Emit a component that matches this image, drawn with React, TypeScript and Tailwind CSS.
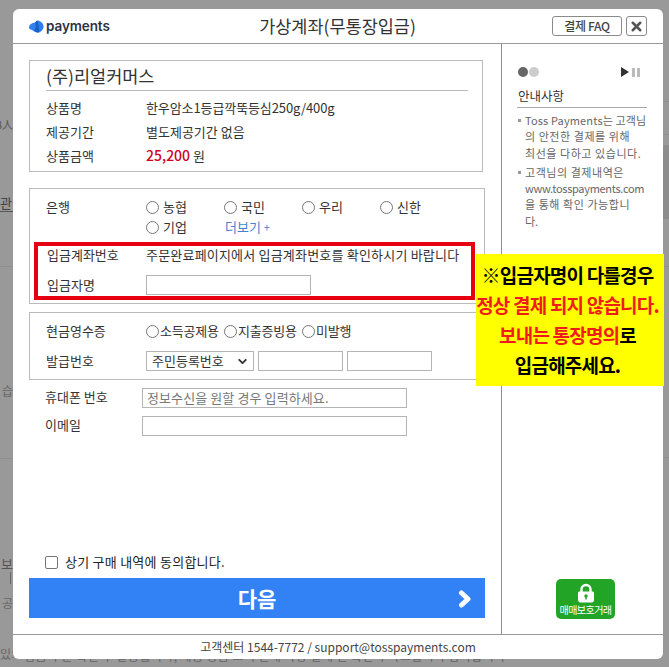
import { ChevronDown, X } from 'lucide-react';

function Circle() {
  return <span className="w-[13px] h-[13px] rounded-full border border-[#767676] bg-white shrink-0" />;
}

function Radio({ label }: { label: string }) {
  return (
    <label className="flex items-center gap-[4px]">
      <Circle />
      <span>{label}</span>
    </label>
  );
}

function Field({ className = '' }: { className?: string }) {
  return <div className={`h-[20px] border border-[#b5b5b5] bg-white ${className}`} />;
}

function Row({ label, children, className = '' }: { label: string; children: React.ReactNode; className?: string }) {
  return (
    <div className={`flex items-center ${className}`}>
      <span className="w-[100px] shrink-0 text-[#333]">{label}</span>
      {children}
    </div>
  );
}

export default function App() {
  return (
    <div className="relative w-[669px] h-[667px] overflow-hidden bg-[#999999] pt-[9px] pl-[13px] text-[13px] leading-[18px] text-[#333] font-['Noto_Sans_CJK_KR','Noto_Sans',sans-serif]">
      {/* page behind the dimmed overlay, only its edges show */}
      <div className="absolute left-0 top-[115px] w-[13px] overflow-hidden whitespace-nowrap text-[11px] text-[#555] flex justify-end">3人</div>
      <div className="absolute left-0 top-[195px] w-[13px] overflow-hidden text-[13px] text-[#444] border-b border-[#555] leading-[16px]">관</div>
      <div className="absolute left-0 top-[266px] w-[13px] h-px bg-[#8f8f8f]" />
      <div className="absolute left-0 top-[382px] w-[13px] overflow-hidden whitespace-nowrap text-[12px] text-[#666] flex justify-end">습</div>
      <div className="absolute left-0 top-[458px] w-[13px] h-px bg-[#8f8f8f]" />
      <div className="absolute left-0 top-[555px] w-[13px] overflow-hidden text-[13px] text-[#555] text-right">보</div>
      <div className="absolute left-[10px] top-[572px] w-px h-[12px] bg-[#666]" />
      <div className="absolute left-0 top-[594px] w-[13px] overflow-hidden text-[12px] text-[#666] flex justify-end">공</div>
      <div className="absolute left-0 top-[645px] w-[13px] overflow-hidden whitespace-nowrap text-[12px] text-[#666]">있으</div>
      <div className="absolute right-0 top-[101px] w-[6px] h-px bg-[#8f8f8f]" />
      <div className="absolute right-0 top-[134px] w-[6px] h-px bg-[#8f8f8f]" />
      <div className="absolute right-0 top-[145px] w-[6px] h-[74px] bg-[#8c8c8c]" />
      <div className="absolute right-0 top-[266px] w-[6px] h-px bg-[#8f8f8f]" />
      <div className="absolute right-0 top-[457px] w-[6px] h-px bg-[#8f8f8f]" />
      <div className="absolute left-[24px] top-[659px] w-[560px] h-[5px] overflow-hidden">
        <div className="-mt-[11px] whitespace-nowrap text-[12px] leading-[16px] text-[#666] tracking-[0.4px]">입금 주문 확인 후 발송됩니다, 배송 상품 고객 안내 사항 결제 전 확인 부탁드립니다 감사합니다</div>
      </div>

      <div className="relative w-[650px] h-[650px] flex flex-col bg-white rounded-[6px] overflow-hidden">
        <header className="h-[35px] shrink-0 flex items-center border-b border-[#999] pl-[16px] pr-[16px]">
          <div className="w-[116px] flex items-center gap-[2px]">
            <svg width="15" height="13" viewBox="0 0 15 13">
              <path d="M0 7.2 C0.4 4.6 3.4 2.8 6 2.6 L8.2 0.4 C11 0.4 14.6 3 14.6 6.4 C14.6 9.6 11.6 12.6 8.4 12.6 C5 12.6 4.4 10 1.6 9.6 C0.6 9.4 0 8.4 0 7.2 Z" fill="#2f80ed" />
              <path d="M6 2.6 C7 5 7.2 8 5.4 10.6 C7 12.2 9 12.8 10 12.4 C11 9 9.6 4 8.2 0.4 Z" fill="#1a5fc4" />
            </svg>
            <span className="text-[13.5px] font-semibold text-[#2b3440] font-['Inter',sans-serif] tracking-[-0.1px]">payments</span>
          </div>
          <h1 className="flex-1 text-center text-[17.5px] font-normal text-[#333] pr-[22px]">가상계좌(무통장입금)</h1>
          <button className="w-[70px] h-[20px] flex items-center justify-center border border-[#8a8a8a] rounded-[3px] text-[12px] font-medium tracking-[-0.3px] text-[#444] mr-[4px]">결제 FAQ</button>
          <button className="w-[21px] h-[20px] flex items-center justify-center border border-[#8a8a8a] rounded-[3px] text-[#555]"><X size={15} strokeWidth={4} /></button>
        </header>

        <div className="flex-1 flex min-h-0">
          <main className="w-[489px] shrink-0 border-r border-[#8f8f8f] pl-[16px] pr-[16px] pt-[16px] flex flex-col">
            <section className="w-[454px] h-[112px] border border-[#bbb] pl-[16px] pr-[14px] pt-[3px]">
              <div className="h-[27px] border-b border-[#bbb] text-[17.5px] leading-[24px] text-[#333]">(주)리얼커머스</div>
              <div className="pt-[8px] flex flex-col gap-[5.5px]">
                <Row label="상품명"><span className="tracking-[-0.1px]">한우암소1등급깍뚝등심250g/400g</span></Row>
                <Row label="제공기간"><span>별도제공기간 없음</span></Row>
                <Row label="상품금액"><span><b className="text-[14px] font-medium text-[#d0021b]">25,200</b> 원</span></Row>
              </div>
            </section>

            <section className="relative mt-[16px] w-[456px] h-[116px] border border-[#bbb] pt-[9px] pl-[16px]">
              <div className="flex">
                <span className="w-[100px] shrink-0">은행</span>
                <div className="grid grid-cols-[78px_78px_78px_78px] gap-y-[2px]">
                  <Radio label="농협" />
                  <Radio label="국민" />
                  <Radio label="우리" />
                  <Radio label="신한" />
                  <Radio label="기업" />
                  <span className="pl-[1px] text-[#4a7fd0]">더보기 <span className="text-[11px]">+</span></span>
                </div>
              </div>
              <div className="absolute left-[4px] top-[53px] w-[441px] h-[58px] border-[4px] border-[#e60012] pl-[9px]">
                <Row label="입금계좌번호" className="h-[18px]"><span className="-ml-[1px] whitespace-nowrap tracking-[0.2px]">주문완료페이지에서 입금계좌번호를 확인하시기 바랍니다</span></Row>
                <Row label="입금자명" className="h-[20px] mt-[11px]"><Field className="w-[165px] -ml-[1px]" /></Row>
              </div>
            </section>

            <section className="mt-[8px] w-[456px] h-[68px] border border-[#bbb] pl-[16px] pt-[9px]">
              <Row label="현금영수증">
                <div className="flex">
                  <label className="w-[78px] flex items-center gap-px whitespace-nowrap tracking-[-0.2px]"><Circle />소득공제용</label>
                  <label className="w-[78px] flex items-center gap-px whitespace-nowrap tracking-[-0.2px]"><Circle />지출증빙용</label>
                  <label className="flex items-center gap-px whitespace-nowrap tracking-[-0.2px]"><Circle />미발행</label>
                </div>
              </Row>
              <Row label="발급번호" className="mt-[11px]">
                <div className="flex gap-[4px]">
                  <div className="w-[108px] h-[20px] border border-[#b5b5b5] flex items-center justify-between pl-[5px] pr-[4px]">
                    주민등록번호
                    <ChevronDown size={13} strokeWidth={3.5} className="text-[#333]" />
                  </div>
                  <Field className="w-[85px]" />
                  <Field className="w-[85px]" />
                </div>
              </Row>
            </section>

            <div className="pl-[16px] pt-[8px] flex flex-col gap-[8px]">
              <div className="flex items-center">
                <span className="w-[97px] shrink-0 -mt-[2px]">휴대폰 번호</span>
                <div className="w-[265px] h-[20px] border border-[#b5b5b5] pl-[4px] leading-[18px] text-[#777] whitespace-nowrap tracking-[0.1px]">정보수신을 원할 경우 입력하세요.</div>
              </div>
              <div className="flex items-center">
                <span className="w-[97px] shrink-0 -mt-[2px]">이메일</span>
                <Field className="w-[265px]" />
              </div>
            </div>

            <label className="mt-auto flex items-center gap-[7px] pl-[16px] mb-[7px]">
              <span className="w-[13px] h-[13px] rounded-[2px] border border-[#767676]" />
              <span className="tracking-[0.25px] text-[#222]">상기 구매 내역에 동의합니다.</span>
            </label>
            <button className="relative h-[40px] w-[456px] shrink-0 mb-[16px] bg-[#3282f6] text-white text-[21px] font-bold flex items-center justify-center">
              다음
              <svg className="absolute right-[13px] top-[12px]" width="14" height="18" viewBox="0 0 14 18">
                <path d="M3.5 3 L10 9 L3.5 15" fill="none" stroke="#fff" strokeWidth="5" strokeLinejoin="round" strokeLinecap="round" />
              </svg>
            </button>
          </main>

          <aside className="flex-1 pl-[15px] pr-[16px] pt-[22px] flex flex-col">
            <div className="flex items-center justify-between h-[12px] pl-px pr-[7px]">
              <div className="flex gap-[1px]">
                <span className="w-[10px] h-[10px] rounded-full bg-[#666]" />
                <span className="w-[10px] h-[10px] rounded-full bg-[#ccc]" />
              </div>
              <div className="flex items-center gap-[3px]">
                <span className="w-0 h-0 border-y-[5px] border-y-transparent border-l-[8px] border-l-[#333]" />
                <span className="w-[3px] h-[9px] bg-[#bbb]" />
                <span className="w-[3px] h-[9px] bg-[#bbb] -ml-[1px]" />
              </div>
            </div>
            <h2 className="mt-[7px] h-[23px] pt-[2px] pl-px border-b border-[#aaa] text-[12.5px] font-normal text-[#333]">안내사항</h2>
            <ul className="mt-[4px] text-[11px] leading-[16.3px] text-[#666] flex flex-col gap-[3px] whitespace-nowrap">
              <li className="relative pl-[8px]">
                <span className="absolute left-px top-[7px] w-[3px] h-[3px] bg-[#999]" />
                <span className="tracking-[0.15px]">Toss Payments는 고객님</span><br />
                <span className="tracking-[0.55px]">의 안전한 결제를 위해</span><br />
                <span className="tracking-[0.55px]">최선을 다하고 있습니다.</span>
              </li>
              <li className="relative pl-[8px]">
                <span className="absolute left-px top-[7px] w-[3px] h-[3px] bg-[#999]" />
                <span className="tracking-[0.55px]">고객님의 결제내역은</span><br />
                <span className="tracking-[-0.3px]">www.tosspayments.com</span><br />
                <span className="tracking-[0.55px]">을 통해 확인 가능합니</span><br />
                다.
              </li>
            </ul>
            <div className="mt-auto mb-[15px] ml-[39px] w-[59px] h-[40px] rounded-[5px] bg-[#22a527] flex flex-col items-center pt-[4px] text-white">
              <svg width="18" height="20" viewBox="0 0 18 20">
                <path d="M4.5 9 V6.5 C4.5 3.8 6.4 2 9 2 C11.6 2 13.5 3.8 13.5 6.5 V9" fill="none" stroke="#fff" strokeWidth="2.4" />
                <path d="M2.5 8.5 H15.5 C16.3 8.5 17 9.2 17 10 V17 C17 18.4 16 19.5 14.5 19.5 H3.5 C2 19.5 1 18.4 1 17 V10 C1 9.2 1.7 8.5 2.5 8.5 Z" fill="#fff" />
                <circle cx="9" cy="13" r="1.7" fill="#22a527" />
                <rect x="8.3" y="13.5" width="1.4" height="3" fill="#22a527" />
              </svg>
              <span className="text-[10px] leading-[13px] tracking-[-0.55px] whitespace-nowrap">매매보호거래</span>
            </div>
          </aside>
        </div>

        <footer className="h-[25px] shrink-0 border-t border-[#999] flex items-center justify-center text-[12px] text-[#444]">
          고객센터 1544-7772 / support@tosspayments.com
        </footer>
      </div>

      <div className="absolute left-[476px] top-[254px] w-[188px] h-[132px] bg-[#ffff00] flex flex-col items-center justify-center pr-[5px] text-[19px] leading-[30px] font-bold tracking-[-0.8px] text-black whitespace-nowrap">
        <div>※입금자명이 다를경우</div>
        <div className="text-[#f01c1c]">정상 결제 되지 않습니다.</div>
        <div><span className="text-[#f01c1c]">보내는 통장명의</span>로</div>
        <div>입금해주세요.</div>
      </div>
    </div>
  );
}
